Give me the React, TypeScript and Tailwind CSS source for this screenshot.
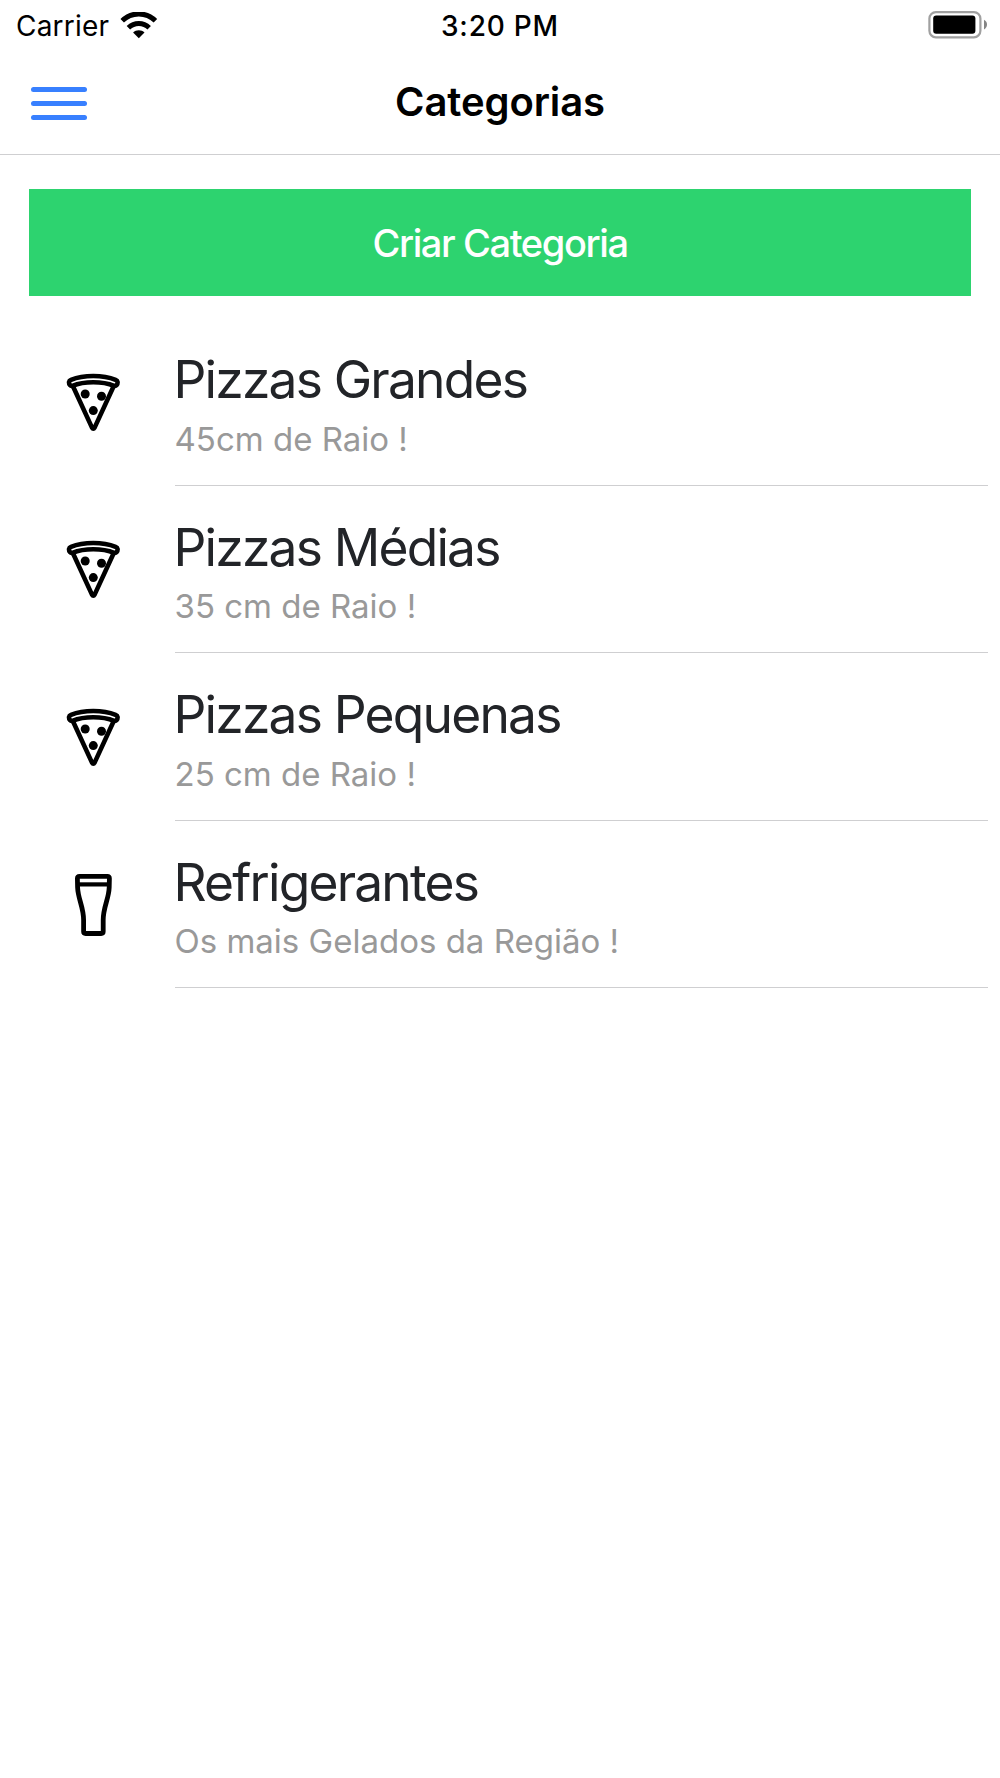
import { clsx } from "clsx";

type IconName = "pizza" | "glass";

const categories: { title: string; description: string; icon: IconName }[] = [
  { title: "Pizzas Grandes", description: "45cm de Raio !", icon: "pizza" },
  { title: "Pizzas Médias", description: "35 cm de Raio !", icon: "pizza" },
  { title: "Pizzas Pequenas", description: "25 cm de Raio !", icon: "pizza" },
  { title: "Refrigerantes", description: "Os mais Gelados da Região !", icon: "glass" },
];

function PizzaIcon() {
  return (
    <svg width="56" height="62" viewBox="15 21 56 62" fill="none" stroke="#000" strokeWidth="4.6" strokeLinejoin="round" strokeLinecap="round">
      <path d="M19 32.2C19.2 31 19.8 30.4 21 29.9C27.6 27.2 35.5 26 43.3 26C51.1 26 59 27.2 65.6 29.9C66.8 30.4 67.4 31 67.6 32.2C67.6 34.6 66.4 36.2 64.2 35.8C58 33.3 51 32.2 43.3 32.2C35.6 32.2 28.6 33.3 22.4 35.8C20.2 36.2 19 34.6 19 32.2Z" />
      <path d="M23.3 37L42 77.6Q43.3 80 44.6 77.6L63.3 37" />
      <g fill="#000" stroke="none">
        <circle cx="35.2" cy="44" r="4.5" />
        <circle cx="51.5" cy="46.3" r="4.5" />
        <circle cx="43.3" cy="60.6" r="4.5" />
      </g>
    </svg>
  );
}

function GlassIcon() {
  return (
    <svg width="56" height="66" viewBox="15 22 56 66" fill="none" stroke="#000" strokeWidth="4.8" strokeLinejoin="round">
      <path d="M29.5 26.4H57.3Q59.4 26.4 59.4 28.5L59.2 37.5C58.8 49 53.2 57 53.2 70V81.5Q53.2 83.5 51.2 83.5H35.6Q33.6 83.5 33.6 81.5V70C33.6 57 28 49 27.6 37.5L27.4 28.5Q27.4 26.4 29.5 26.4Z" />
      <path d="M28 34.4H59" strokeWidth="4.2" />
    </svg>
  );
}

function WifiIcon() {
  return (
    <svg width="38" height="28" viewBox="0 0 38 28" fill="none" stroke="#000" strokeWidth="5">
      <path d="M2.2 8.8C11.5 -.4 26.1 -.4 35.4 8.8" />
      <path d="M8.4 15.7C14.3 10.1 23.3 10.1 29.2 15.7" />
      <path d="M13.1 20.6C16 17.4 21.6 17.4 24.5 20.6L18.8 26.2Z" fill="#000" stroke="none" />
    </svg>
  );
}

function BatteryIcon() {
  return (
    <svg width="60" height="28" viewBox="0 0 60 28">
      <rect x="1.4" y="1.1" width="51" height="25.2" rx="6.5" fill="none" stroke="#a0a0a0" strokeWidth="2.2" />
      <rect x="5.2" y="4.6" width="42.2" height="18.2" rx="3" />
      <path d="M56 8.8Q59 10.4 59 13.6Q59 16.8 56 18.4Z" fill="#858585" />
    </svg>
  );
}

function StatusBar() {
  return (
    <div className="grid h-[50px] grid-cols-3 items-center text-[28px] leading-[50px] text-black">
      <div className="flex items-center pl-4">
        <span className="w-[104px] pt-px tracking-[0.2px]">Carrier</span>
        <WifiIcon />
      </div>
      <span className="pt-px text-center font-medium tracking-[0.8px]">3:20 PM</span>
      <div className="flex justify-end pr-3 pb-0.5">
        <BatteryIcon />
      </div>
    </div>
  );
}

function Header() {
  return (
    <header className="grid h-[105px] grid-cols-3 items-center border-b border-[#cfcfd1] px-[31px]">
      <button aria-label="Menu" className="flex w-14 flex-col gap-[9px] pt-0.5">
        <span className="h-[5px] rounded-full bg-[#3880ff]" />
        <span className="h-[5px] rounded-full bg-[#3880ff]" />
        <span className="h-[5px] rounded-full bg-[#3880ff]" />
      </button>
      <h1 className="text-center text-[40px] leading-[50px] font-semibold tracking-[-0.1px] text-black">
        Categorias
      </h1>
    </header>
  );
}

export default function App() {
  return (
    <div className="min-h-[1778px] w-full bg-white font-['Inter',sans-serif]">
      <StatusBar />
      <Header />

      <main className="pt-[34px]">
        <button className="mx-[29px] flex h-[107px] w-[942px] items-center justify-center bg-[#2dd36f] pt-[2px] text-[38px] font-medium tracking-[-1.4px] text-white">
          Criar Categoria
        </button>

        <ul className="mt-[22px]">
          {categories.map((item) => (
            <li key={item.title} className="flex h-[167.5px]">
              <div
                className={clsx(
                  "flex w-[174.5px] shrink-0 justify-start pl-[65px]",
                  item.icon === "pizza" ? "pt-[52.9px]" : "pt-[51.5px]"
                )}
              >
                {item.icon === "pizza" ? <PizzaIcon /> : <GlassIcon />}
              </div>
              <div className="mr-3 flex-1 border-b border-[#cfcfd1] pt-[29px]">
                <h2 className="-ml-px text-[51.5px] leading-[64px] tracking-[-1.8px] text-[#222428]">{item.title}</h2>
                <p className="mt-[7.5px] text-[33px] leading-[40px] text-[#999999]">{item.description}</p>
              </div>
            </li>
          ))}
        </ul>
      </main>
    </div>
  );
}
